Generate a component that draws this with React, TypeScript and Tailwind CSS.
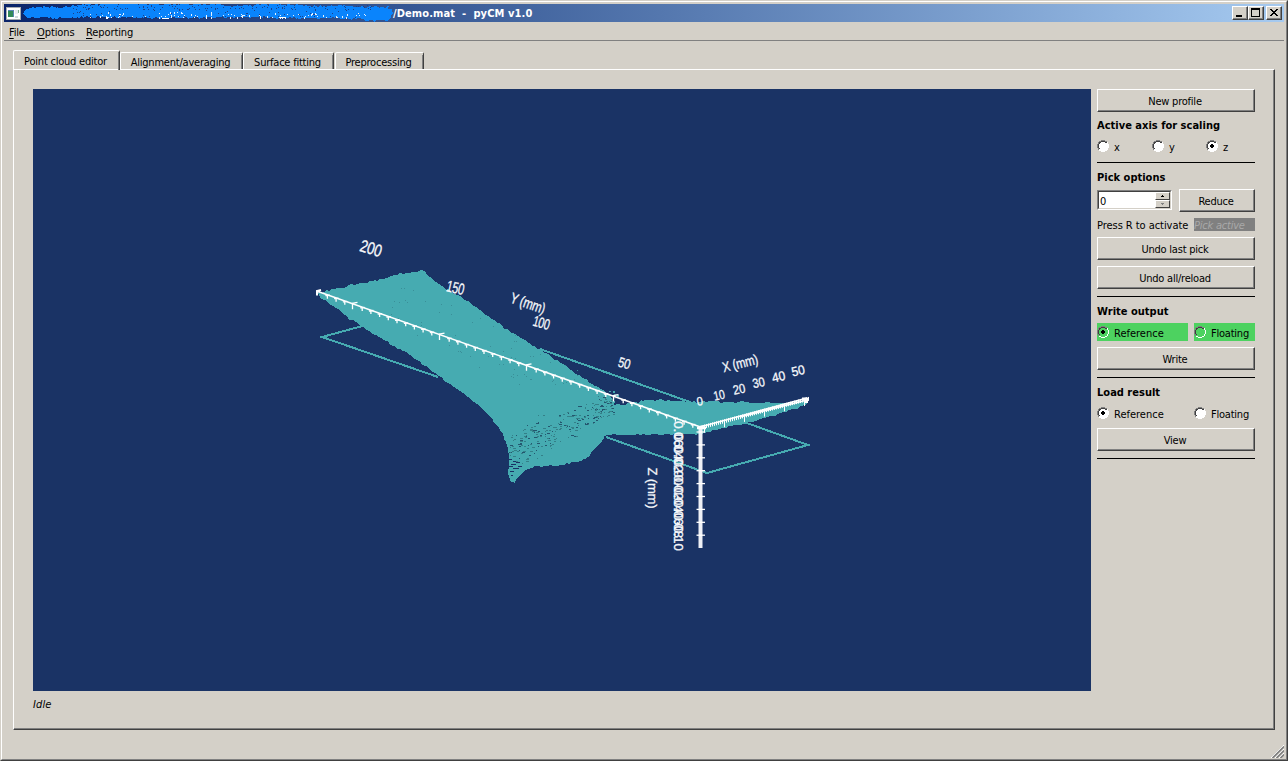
import React from "react";

type Pt = [number, number];

function makeRandom(seed: number) {
  let s = seed;
  return () => {
    s = (s + 0x6d2b79f5) | 0;
    let t = Math.imul(s ^ (s >>> 15), 1 | s);
    t = (t + Math.imul(t ^ (t >>> 7), 61 | t)) ^ t;
    return ((t ^ (t >>> 14)) >>> 0) / 4294967296;
  };
}

function roughen(points: Pt[], step: number, amount: number, seed: number) {
  const rnd = makeRandom(seed);
  const out: string[] = [];
  points.forEach(([x, y], i) => {
    const [nx, ny] = points[(i + 1) % points.length];
    const n = Math.max(1, Math.round(Math.hypot(nx - x, ny - y) / step));
    for (let k = 0; k < n; k++) {
      const px = x + ((nx - x) * k) / n + (rnd() - 0.5) * amount;
      const py = y + ((ny - y) * k) / n + (rnd() - 0.5) * amount;
      out.push(`${Math.round(px)},${Math.round(py)}`);
    }
  });
  return out.join(" ");
}

const cloud: Pt[] = [
  [319, 294], [326, 291], [355, 284], [378, 280], [400, 274], [416, 271], [421, 269], [427, 275],
  [445, 289], [460, 295], [480, 310], [505, 328], [535, 347], [545, 352], [570, 369], [590, 382],
  [611, 396], [615, 405], [625, 404], [640, 401], [660, 400], [680, 401], [700, 402], [745, 402],
  [790, 403], [806, 400], [807, 403], [798, 408], [775, 415], [740, 424], [705, 433], [690, 434],
  [650, 435], [607, 434], [600, 443], [590, 455], [583, 459], [575, 462], [560, 465], [535, 467], [525, 470],
  [518, 477], [515, 482], [511, 482], [508, 470], [510, 458], [507, 445], [500, 430], [487, 413],
  [470, 398], [440, 377], [408, 354], [375, 335], [350, 319], [335, 308], [322, 298],
];
const cloudPoints = roughen(cloud, 3, 2, 7);

const holes = (() => {
  const r = makeRandom(41);
  const out: { x: number; y: number; w: number; c: string }[] = [];
  for (let i = 0; i < 260; i++) {
    const t = r();
    const x = 509 + t * 105;
    const mid = 449 - t * 46;
    const y = mid + (r() + r() - 1) * (26 - t * 12);
    out.push({ x: Math.round(x), y: Math.round(y), w: r() > 0.75 ? 3 : r() > 0.5 ? 2 : 1, c: r() > 0.6 ? "#24566f" : "#348088" });
  }
  for (let i = 0; i < 70; i++) {
    const t = r();
    out.push({ x: Math.round(390 + t * 190), y: Math.round(300 + t * 90 + (r() - 0.5) * 50), w: 1, c: "#3a8f98" });
  }
  return out.filter((h) => h.y < 464);
})();

const scribble = roughen(
  [[24, 10], [30, 8], [60, 7], [78, 6], [84, 4], [130, 4], [180, 4], [215, 5], [230, 6], [275, 4], [310, 6], [350, 6], [375, 7], [388, 7], [392, 10], [392, 16], [387, 20], [372, 21], [362, 19], [340, 18], [300, 18], [240, 17], [160, 18], [90, 17], [40, 18], [28, 17], [24, 15]],
  2, 2.2, 5,
);
const specks = (() => {
  const r = makeRandom(99);
  return Array.from({ length: 270 }, (_, i) => {
    const white = i % 3 === 0;
    return {
      x: Math.round((white ? 85 : 70) + r() * (white ? 290 : 302)),
      y: Math.round(white ? 11 + Math.sqrt(r()) * 6 : r() > 0.4 ? 5 + r() * 4 : 9 + r() * 9),
      h: white && r() > 0.6 ? 2 : 1,
      c: white ? "#e6f1fc" : "#1c3f88",
    };
  });
})();

const sceneFont = '"Liberation Sans", Arial, sans-serif';

function Label({ x, y, r, s = 14, w, children }: { x: number; y: number; r: number; s?: number; w: number; children: string }) {
  return (
    <text transform={`translate(${x} ${y}) rotate(${r})`} dy={s * 0.36} textAnchor="middle" fontSize={s} fill="#f6f8fb" stroke="#f6f8fb" strokeWidth="0.3" textLength={w} lengthAdjust="spacingAndGlyphs" fontFamily={sceneFont}>
      {children}
    </text>
  );
}

function Scene() {
  const yTicks = Array.from({ length: 44 }, (_, i) => {
    const x = 701.5 - i * 8.7;
    return { x, y: 427 - (700.5 - x) * 0.3534, major: i % 10 === 0 };
  });
  const xTicks = Array.from({ length: 53 }, (_, i) => ({ x: 704.5 + i * 2, y: 425.5 - i * 0.53, major: i % 10 === 0 }));
  const zLabels = ["0.06", "0.04", "0.02", "0.00", "-0.02", "-0.04", "-0.06", "-0.08", "-0.10"];
  return (
    <svg className="block h-[602px] w-[1058px]" viewBox="33 89 1058 602">
      <g fill="none" stroke="#46abb1" strokeWidth="2" shapeRendering="crispEdges">
        <path d="M366 325 L322 337 L438 377" />
        <path d="M540 349 L690 402" />
        <path d="M606 437 L707 473 L808 445 L744 422" />
      </g>
      <polygon points={cloudPoints} fill="#46abb1" shapeRendering="crispEdges" />
      <g shapeRendering="crispEdges">
        {holes.map((h, i) => <rect key={i} x={h.x} y={h.y} width={h.w} height="1" fill={h.c} />)}
        <path d="M509 459h3v1h-3zM513 461h3v1h-3zM511 464h5v1h-5zM509 466h4v1h-4zM516 462h4v1h-4zM510 471h4v1h-4zM513 468h6v1h-6zM518 466h4v1h-4zM511 475h2v1h-2z" fill="#1a3365" />
        <path d="M613 391h2v2h-2zM617 395h2v2h-2zM609 391h2v1h-2z" fill="#46abb1" />
      </g>
      <g stroke="#ffffff" fill="none">
        <path d="M318 291.500 L700.500 427" strokeWidth="1.6" />
        {yTicks.map((t, i) => (
          <path key={i} strokeWidth="1.3" d={t.major ? `M${t.x - 1} ${t.y + 5} V${t.y - 1} L${t.x + 4} ${t.y - 2}` : `M${t.x - 2} ${t.y + 0.5} L${t.x + 2.5} ${t.y} M${t.x} ${t.y} V${t.y + 3.5}`} />
        ))}
        <path d="M317 295.500 V291 L321 290" strokeWidth="2" />
        <path d="M316 291.500 H320" strokeWidth="2" />
        <path d="M700 427 L807 398" strokeWidth="1.8" />
        <path d="M740 417 L807 400" strokeWidth="1.8" />
        {xTicks.map((t, i) => <path key={i} strokeWidth="1" d={`M${t.x} ${t.y - 1} v${t.major ? 8 : 4}`} />)}
        <path d="M802 399 h4.500 v4" strokeWidth="3" />
        <path d="M700.500 427 V548" strokeWidth="4" stroke="#eef0f6" />
        <path d="M697 428 H706" strokeWidth="2.5" />
        {Array.from({ length: 9 }, (_, i) => <path key={i} strokeWidth="1.3" d={`M696.500 ${432 + i * 12.9} h8.500`} />)}
      </g>
      <Label x={371} y={248} r={17} s={17} w={22}>200</Label>
      <Label x={455.5} y={287.5} r={13} s={16} w={18}>150</Label>
      <Label x={528} y={303} r={19} s={15} w={36}>Y (mm)</Label>
      <Label x={541.5} y={322.5} r={15} s={15} w={17}>100</Label>
      <Label x={624.5} y={363} r={16} s={14} w={12}>50</Label>
      <Label x={740} y={363} r={-14} s={14} w={36}>X (mm)</Label>
      <Label x={699.5} y={401} r={-8} s={12} w={6}>0</Label>
      <Label x={719} y={395} r={-12} s={13} w={11}>10</Label>
      <Label x={739} y={389} r={-12} s={13} w={12}>20</Label>
      <Label x={758.5} y={382.5} r={-12} s={13} w={12}>30</Label>
      <Label x={778.5} y={376.5} r={-12} s={13} w={13}>40</Label>
      <Label x={798} y={370.5} r={-12} s={13} w={13}>50</Label>
      <Label x={652.5} y={488} r={90} s={13} w={41}>Z (mm)</Label>
      {zLabels.map((t, i) => <Label key={i} x={678.5} y={434 + i * 12.75} r={90} s={13} w={t.length > 4 ? 29 : 26}>{t}</Label>)}
    </svg>
  );
}

function Button({ children, className = "" }: { children: React.ReactNode; className?: string }) {
  return (
    <button className={`h-[23px] shrink-0 border border-t-white border-l-white border-r-[#404040] border-b-[#404040] text-center ${className}`}>
      <span className="flex h-full items-center justify-center border-r border-b border-[#808080] pt-[2px] pr-px leading-none">{children}</span>
    </button>
  );
}

function Radio({ label, on, bg = "white", className = "" }: { label: string; on?: boolean; bg?: string; className?: string }) {
  return (
    <div className={`flex h-[18px] items-center gap-[5px] ${className}`}>
      <svg className="h-3 w-3 shrink-0" viewBox="0 0 12 12" shapeRendering="crispEdges">
        <path d="M4 1h4v1h2v2h1v4h-1v2h-2v1h-4v-1h-2v-2h-1v-4h1v-2h2z" fill={bg} />
        <path d="M4 0h4v1h-4zM2 1h2v1h-2zM8 1h2v1h-2zM1 2h1v2h-1zM0 4h1v4h-1zM1 8h1v2h-1z" fill="#808080" />
        <path d="M4 1h4v1h-4zM2 2h2v1h-2zM8 2h2v1h-2zM2 3h1v1h-1zM1 4h1v4h-1zM2 8h1v1h-1z" fill="#404040" />
        <path d="M10 2h1v2h-1zM11 4h1v4h-1zM10 8h1v2h-1zM8 10h2v1h-2zM4 11h4v1h-4zM2 10h2v1h-2z" fill="#fff" />
        {on && <path d="M5 4h2v1h1v2h-1v1h-2v-1h-1v-2h1z" fill="#000" />}
      </svg>
      <span className="pt-[2px] leading-none">{label}</span>
    </div>
  );
}

function Rule({ className }: { className: string }) {
  return <div className={`h-px shrink-0 bg-black ${className}`} />;
}

function Heading({ children, className }: { children: string; className: string }) {
  return <div className={`h-[14px] shrink-0 pt-px font-bold leading-[14px] tracking-[0.01px] ${className}`}>{children}</div>;
}

function Tab({ children, className }: { children: string; className: string }) {
  return (
    <div className={`shrink-0 rounded-t-[2px] border-t border-l border-r border-t-white border-l-white border-r-[#404040] ${className}`}>
      <div className="flex h-full items-center justify-center border-r border-[#808080] pr-px whitespace-nowrap leading-none">{children}</div>
    </div>
  );
}

function WinButton({ children, className = "" }: { children: React.ReactNode; className?: string }) {
  return (
    <div className={`h-[14px] w-4 border border-t-white border-l-white border-r-[#404040] border-b-[#404040] bg-[#d4d0c8] ${className}`}>
      <div className="h-full border-r border-b border-[#808080]">
        <svg className="block h-[11px] w-[13px]" viewBox="0 0 13 11" shapeRendering="crispEdges">{children}</svg>
      </div>
    </div>
  );
}

export default function App() {
  return (
    <div className="h-[761px] w-[1288px] overflow-hidden border-t border-l border-r border-b border-t-[#d4d0c8] border-l-[#d4d0c8] border-r-[#404040] border-b-[#404040] bg-[#d4d0c8] font-['DejaVu_Sans_Condensed','DejaVu_Sans',sans-serif] text-[11px] tracking-[-0.22px] text-black">
      <div className="flex h-full flex-col border border-t-white border-l-white border-r-[#808080] border-b-[#808080] px-[2px] pt-[2px]">
        <header className="relative flex h-[18px] shrink-0 items-center bg-linear-to-r from-[#0a246a] to-[#a6caf0]">
          <svg className="ml-[2px] h-[13px] w-[15px]" viewBox="0 0 15 13" shapeRendering="crispEdges">
            <rect width="15" height="13" fill="#a9adb0" />
            <rect x="1" y="1" width="13" height="11" fill="#fff" />
            <rect x="2" y="3" width="6" height="7" fill="#5b86b4" />
            <rect x="2" y="4" width="5" height="6" fill="#348a58" />
            <rect x="9" y="3" width="3" height="4" fill="#e8edf1" />
            <rect x="12" y="3" width="1" height="3" fill="#7fb08c" />
            <rect x="9" y="9" width="3" height="2" fill="#d3dade" />
          </svg>
          <svg className="absolute top-0 left-0 h-[18px] w-[392px]" viewBox="4 4 392 18" shapeRendering="crispEdges">
            <polygon points={scribble} fill="#0a84fc" />
            {specks.map((s, i) => <rect key={i} x={s.x} y={s.y} width="1" height={s.h} fill={s.c} />)}
            <path d="M162 18h7v1h-7zM279 17h7v1h-7zM106 17h2v2h-2zM206 16h1v3h-1zM260 16h1v3h-1z" fill="#fff" />
          </svg>
          <span className="ml-[372px] pt-[2px] font-bold tracking-[0.1px] whitespace-pre text-white">/Demo.mat  -  pyCM v1.0</span>
          <div className="ml-auto flex pr-[2px]">
            <WinButton><rect x="3" y="8" width="6" height="2" /></WinButton>
            <WinButton><path d="M2 1h9v9h-9zM3 3v6h7v-6z" fillRule="evenodd" /></WinButton>
            <WinButton className="ml-[2px]"><path d="M3 2h2v1h1v1h2v-1h1v-1h2v1h-1v1h-1v1h-1v1h1v1h1v1h1v1h-2v-1h-1v-1h-2v1h-1v1h-2v-1h1v-1h1v-1h1v-1h-1v-1h-1v-1h-1z" /></WinButton>
          </div>
        </header>
        <nav className="flex h-[19px] shrink-0 items-center border-b border-[#808080] pl-[5px] leading-none">
          <span className="w-[28px] pt-[3px]"><u className="underline-offset-2">F</u>ile</span>
          <span className="w-[49px] pt-[3px] tracking-[-0.1px]"><u className="underline-offset-2">O</u>ptions</span>
          <span className="pt-[3px] tracking-[-0.1px]"><u className="underline-offset-2">R</u>eporting</span>
        </nav>
        <main className="flex flex-col px-[9px] pt-[9px]">
          <div className="flex h-[19px] items-end">
            <Tab className="z-10 -mb-px h-5 w-[107px] pt-px">Point cloud editor</Tab>
            <Tab className="h-[17px] w-[123px] border-l-[#d4d0c8] pt-[2px]">Alignment/averaging</Tab>
            <Tab className="h-[17px] w-[91px] pt-[2px]">Surface fitting</Tab>
            <Tab className="ml-px h-[17px] w-[89px] pt-[2px]">Preprocessing</Tab>
          </div>
          <div className="h-[661px] w-[1262px] border border-t-white border-l-white border-r-[#404040] border-b-[#404040]">
            <div className="flex h-full border-r border-b border-[#808080] pt-[19px] pl-[19px]">
              <section className="w-[1058px] shrink-0">
                <div className="bg-[#1a3365]"><Scene /></div>
                <p className="pt-[7px] leading-[14px] tracking-[0.1px] italic">Idle</p>
              </section>
              <aside className="ml-[6px] flex w-[158px] shrink-0 flex-col">
                <Button>New profile</Button>
                <Heading className="mt-[6px]">Active axis for scaling</Heading>
                <div className="mt-[5px] flex h-[18px] shrink-0">
                  <Radio label="x" className="w-[55px]" />
                  <Radio label="y" className="w-[54px]" />
                  <Radio label="z" on />
                </div>
                <Rule className="mt-[7px]" />
                <Heading className="mt-[7px]">Pick options</Heading>
                <div className="mt-[5px] flex shrink-0 items-center justify-between">
                  <div className="mb-px h-[20px] w-[75px] border border-t-[#808080] border-l-[#808080] border-r-white border-b-white">
                    <div className="flex h-full border border-t-[#404040] border-l-[#404040] border-r-[#d4d0c8] border-b-[#d4d0c8] bg-white">
                      <span className="flex-1 pt-[2px] pl-[1px] leading-[15px]">0</span>
                      <div className="flex w-[15px] flex-col">
                        {[0, 1].map((i) => (
                          <div key={i} className="flex h-2 items-center justify-center border border-t-white border-l-white border-r-[#404040] border-b-[#404040] bg-[#d4d0c8]">
                            <svg className="h-[2px] w-[3px]" viewBox="0 0 3 2" shapeRendering="crispEdges">
                              <path d={i === 0 ? "M1 0h1v1h1v1h-3v-1h1z" : "M0 0h3v1h-1v1h-1v-1h-1z"} fill={i === 0 ? "#000" : "#808080"} />
                            </svg>
                          </div>
                        ))}
                      </div>
                    </div>
                  </div>
                  <Button className="w-[76px]">Reduce</Button>
                </div>
                <div className="mt-[6px] flex h-[13px] shrink-0 items-center justify-between leading-none whitespace-nowrap">
                  <span className="pt-px tracking-[-0.05px]">Press R to activate</span>
                  <span className="h-[13px] w-[61px] bg-[#808080] pt-px leading-[13px] text-[#a9a9a9] italic">Pick active</span>
                </div>
                <Button className="mt-[6px]">Undo last pick</Button>
                <Button className="mt-[6px]">Undo all/reload</Button>
                <Rule className="mt-[7px]" />
                <Heading className="mt-[7px]">Write output</Heading>
                <div className="mt-[5px] flex shrink-0 justify-between">
                  <Radio label="Reference" on bg="#4dd260" className="w-[91px] bg-[#4dd260] tracking-[0px]" />
                  <Radio label="Floating" bg="#4dd260" className="w-[61px] bg-[#4dd260]" />
                </div>
                <Button className="mt-[6px]">Write</Button>
                <Rule className="mt-[7px]" />
                <Heading className="mt-[7px]">Load result</Heading>
                <div className="mt-[5px] flex shrink-0 justify-between">
                  <Radio label="Reference" on className="w-[91px] tracking-[0px]" />
                  <Radio label="Floating" className="w-[61px]" />
                </div>
                <Button className="mt-[6px]">View</Button>
                <Rule className="mt-[7px]" />
              </aside>
            </div>
          </div>
        </main>
        <footer className="mt-auto flex justify-end pb-[1px]">
          <svg className="h-[13px] w-[13px]" viewBox="0 0 13 13">
            <path d="M0 13 L13 0 M4 13 L13 4 M8 13 L13 8" stroke="#fff" />
            <path d="M1.500 13 L13 1.500 M5.500 13 L13 5.500 M9.500 13 L13 9.500" stroke="#808080" strokeWidth="1.7" />
          </svg>
        </footer>
      </div>
    </div>
  );
}
